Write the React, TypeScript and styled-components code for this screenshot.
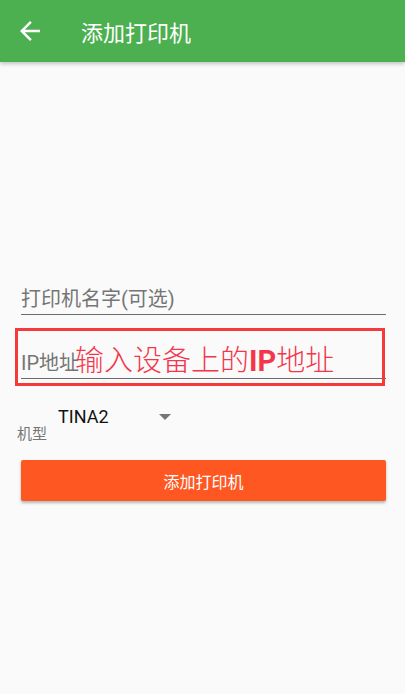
import React from "react";
import styled, { createGlobalStyle } from "styled-components";

const GlobalStyle = createGlobalStyle`
  html, body {
    margin: 0;
    padding: 0;
    background: #fafafa;
  }
  body {
    font-family: Roboto, "Noto Sans CJK SC", sans-serif;
  }
  * {
    box-sizing: border-box;
  }
`;

const Page = styled.div`
  width: 405px;
  height: 694px;
  background: #fafafa;
  display: flex;
  flex-direction: column;
`;

const AppBar = styled.header`
  height: 62px;
  background: #4caf50;
  display: flex;
  align-items: center;
  padding-left: 17px;
  box-shadow: 0 2px 4px rgba(0, 0, 0, 0.22);
  flex-shrink: 0;
`;

const BackButton = styled.button`
  width: 26px;
  height: 26px;
  padding: 0;
  border: none;
  background: none;
  display: flex;
  align-items: center;
  justify-content: center;
  margin-right: 38px;
`;

const Title = styled.h1`
  margin: 0;
  font-size: 22px;
  font-weight: 400;
  color: #fff;
  font-family: "Noto Sans CJK SC", sans-serif;
`;

const Form = styled.form`
  display: flex;
  flex-direction: column;
  padding: 0 19px 0 21px;
  margin-top: 221px;
`;

const Field = styled.div<{ $gap?: number }>`
  position: relative;
  height: 32px;
  border-bottom: 1px solid #6b6b6b;
  display: flex;
  align-items: flex-end;
  padding-bottom: 3px;
  margin-bottom: ${(p) => p.$gap ?? 0}px;
`;

const Hint = styled.span`
  font-size: 20px;
  line-height: 24px;
  color: #757575;
`;

const Annotation = styled.div`
  position: absolute;
  left: -6px;
  right: 1px;
  top: -19px;
  bottom: -8px;
  border: 3px solid #f63a3a;
  display: flex;
  align-items: center;
  padding-left: 57px;
  padding-top: 5px;
  pointer-events: none;
`;

const AnnotationText = styled.span`
  font-family: "Noto Sans CJK SC", sans-serif;
  font-weight: 300;
  font-size: 29px;
  line-height: 34px;
  color: #f4364a;

  b {
    font-family: Roboto, sans-serif;
    font-weight: 700;
  }
`;

const SpinnerRow = styled.div`
  display: flex;
  align-items: flex-end;
  margin-left: -4px;
  height: 57px;
`;

const SpinnerLabel = styled.span`
  font-size: 15px;
  line-height: 20px;
  color: #757575;
  margin-right: 11px;
`;

const SpinnerValue = styled.div`
  align-self: flex-start;
  margin-top: 12px;
  display: flex;
  align-items: center;
  height: 34px;
  width: 113px;
  justify-content: space-between;
`;

const ValueText = styled.span`
  font-size: 18px;
  color: #111;
`;

const Caret = styled.span`
  width: 0;
  height: 0;
  border-left: 6px solid transparent;
  border-right: 6px solid transparent;
  border-top: 6px solid #757575;
  margin-top: 1px;
`;

const SubmitButton = styled.button`
  margin-top: 16px;
  height: 41px;
  border: none;
  border-radius: 2px;
  background: #ff5722;
  color: #fff;
  font-family: "Noto Sans CJK SC", sans-serif;
  font-size: 16px;
  box-shadow: 0 2px 3px rgba(0, 0, 0, 0.28);
`;

const BackIcon = () => (
  <svg width="20" height="20" viewBox="0 0 16 16">
    <path
      d="M16 7H3.83l5.59-5.59L8 0 0 8l8 8 1.41-1.41L3.83 9H16z"
      fill="#fff"
    />
  </svg>
);

export default function App() {
  return (
    <>
      <GlobalStyle />
      <Page>
        <AppBar>
          <BackButton type="button">
            <BackIcon />
          </BackButton>
          <Title>添加打印机</Title>
        </AppBar>
        <Form>
          <Field $gap={32}>
            <Hint>打印机名字(可选)</Hint>
          </Field>
          <Field $gap={8}>
            <Hint>IP地址</Hint>
            <Annotation>
              <AnnotationText>
                输入设备上的<b>IP</b>地址
              </AnnotationText>
            </Annotation>
          </Field>
          <SpinnerRow>
            <SpinnerLabel>机型</SpinnerLabel>
            <SpinnerValue>
              <ValueText>TINA2</ValueText>
              <Caret />
            </SpinnerValue>
          </SpinnerRow>
          <SubmitButton type="button">添加打印机</SubmitButton>
        </Form>
      </Page>
    </>
  );
}
